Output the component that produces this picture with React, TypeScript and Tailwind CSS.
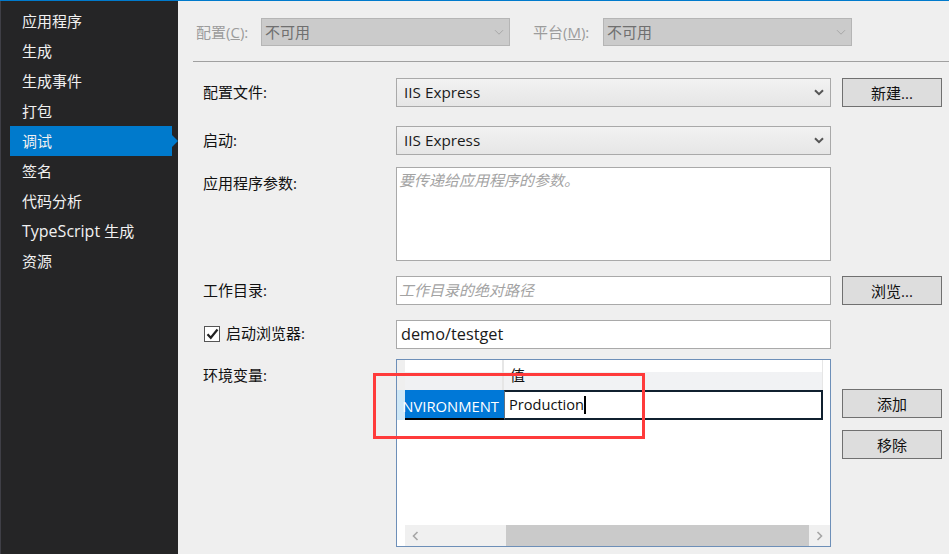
const FONT = "font-['Open_Sans','Noto_Sans_CJK_SC',sans-serif]";

const navItems = ["应用程序", "生成", "生成事件", "打包", "调试", "签名", "代码分析", "TypeScript 生成", "资源"];

function Chevron({ color, width = 1.6 }: { color: string; width?: number }) {
  return (
    <svg width="10" height="7" viewBox="0 0 10 7" fill="none">
      <path d="M1 1.2 5 5.2 9 1.2" stroke={color} strokeWidth={width} />
    </svg>
  );
}

function Select({ value }: { value: string }) {
  return (
    <div className="flex h-[29px] w-[435px] items-center justify-between border border-[#a9a9a9] bg-gradient-to-b from-[#f2f2f2] to-[#e6e6e6] pl-[7px] pr-[6px] text-[15.3px] text-[#1a1a1a]">
      <span>{value}</span>
      <Chevron color="#555555" width={2} />
    </div>
  );
}

function DisabledSelect() {
  return (
    <div className="flex h-[28px] w-[249px] items-center justify-between border border-[#b5b5b5] bg-[#cbcbcb] pl-[3px] pr-[5px] text-[15px] text-[#6f6f6f]">
      <span>不可用</span>
      <Chevron color="#a8a8a8" width={1} />
    </div>
  );
}

function Button({ label }: { label: string }) {
  return (
    <div className="flex h-[29px] w-[100px] items-center justify-center border border-[#707070] bg-[#dddddd] pt-[2px] text-[15px] text-[#111111]">
      {label}
    </div>
  );
}

function Label({ children }: { children: string }) {
  return <div className="w-[203px] pb-[2px] pl-[10px] text-[15px] leading-[20px] text-[#111111]">{children}</div>;
}

export default function App() {
  return (
    <div className={`${FONT} flex h-[554px] w-[949px] flex-col overflow-hidden bg-[#efefef]`}>
      <div className="h-px shrink-0 bg-[#007acc]" />
      <div className="flex min-h-0 flex-1">
        <aside className="w-[178px] shrink-0 border-l border-[#3f3f46] bg-[#252526] pt-[5px]">
          {navItems.map((item) => {
            const active = item === "调试";
            const latin = item.startsWith("TypeScript");
            return (
              <div key={item} className="relative ml-[9px] flex h-[30px] w-[162px] items-center pl-[12px] text-[15px] text-[#f1f1f1]">
                {active && <div className="absolute inset-0 bg-[#007acc]" />}
                {active && (
                  <div className="absolute left-[162px] top-[9px] h-0 w-0 border-y-[6px] border-l-[6px] border-y-transparent border-l-[#007acc]" />
                )}
                {latin ? (
                  <span className="relative">
                    <span className="text-[16px]">TypeScript </span>生成
                  </span>
                ) : (
                  <span className="relative">{item}</span>
                )}
              </div>
            );
          })}
        </aside>

        <main className="relative min-w-0 flex-1">
          <div className="flex pl-[18px] pt-[17px] text-[15px] text-[#9c9c9c]">
            <div className="flex items-center">
              <span className="w-[65px]">配置(<span className="underline">C</span>):</span>
              <DisabledSelect />
            </div>
            <div className="ml-[23px] flex items-center">
              <span className="w-[70px]">平台(<span className="underline">M</span>):</span>
              <DisabledSelect />
            </div>
          </div>

          <div className="ml-[15px] mt-[15px] h-px bg-[#a0a0a0]" />

          <div className="ml-[15px] mt-[16px] flex flex-col">
            <div className="flex items-center">
              <Label>配置文件:</Label>
              <Select value="IIS Express" />
              <div className="ml-[11px]"><Button label="新建..." /></div>
            </div>

            <div className="mt-[19px] flex items-center">
              <Label>启动:</Label>
              <Select value="IIS Express" />
            </div>

            <div className="mt-[12px] flex items-start">
              <div className="pt-[6px]"><Label>应用程序参数:</Label></div>
              <div className="h-[94px] w-[435px] border border-[#a9a9a9] bg-white px-[2px] py-[1px] text-[15px] italic text-[#a3a3a3]">
                要传递给应用程序的参数。
              </div>
            </div>

            <div className="mt-[15px] flex items-center">
              <Label>工作目录:</Label>
              <div className="flex h-[29px] w-[435px] items-center border border-[#a9a9a9] bg-white px-[2px] text-[15px] italic text-[#a3a3a3]">
                工作目录的绝对路径
              </div>
              <div className="ml-[11px]"><Button label="浏览..." /></div>
            </div>

            <div className="mt-[15px] flex items-center">
              <div className="flex w-[203px] items-center pb-[2px] pl-[11px] text-[15px] text-[#111111]">
                <div className="flex h-[16px] w-[16px] items-center justify-center border border-[#555555] bg-white">
                  <svg width="13" height="12" viewBox="0 0 13 12" fill="none">
                    <path d="M1.5 6.2 4.8 9.8 11.5 1.5" stroke="#222222" strokeWidth="2.2" />
                  </svg>
                </div>
                <span className="ml-[6px] pb-[1px]">启动浏览器:</span>
              </div>
              <div className="flex h-[29px] w-[435px] items-center border border-[#a9a9a9] bg-white px-[4px] text-[16.3px] text-[#1a1a1a]">
                demo/testget
              </div>
            </div>

            <div className="mt-[10px] flex items-start">
              <div className="pt-[6px]"><Label>环境变量:</Label></div>
              <div className="flex h-[188px] w-[435px] flex-col border border-[#6d8fb8] bg-white">
                <div className="flex h-[30px] shrink-0 pr-[7px]">
                  <div className="w-[8px] bg-[#efefef]" />
                  <div className="flex flex-1 border-r border-[#e6e6e6]">
                    <div className="w-[99px] border-r-2 border-[#e6e6e6] bg-gradient-to-b from-white from-40% to-[#f0f1f3] to-40%" />
                    <div className="flex-1 bg-gradient-to-b from-white from-40% to-[#f1f2f4] to-40% pl-[6px] text-[15px] leading-[30px] text-[#111111]">
                      值
                    </div>
                  </div>
                </div>
                <div className="flex h-[30px] shrink-0 pr-[7px]">
                  <div className="w-[8px] bg-[#cfe8f7]" />
                  <div className="flex w-[99px] items-center justify-end whitespace-nowrap border-b-2 border-black bg-[#0078d7] pr-[5px] pt-[5px] text-[14.8px] text-white">
                    NVIRONMENT
                  </div>
                  <div className="flex flex-1 items-center border-2 border-l border-[#10202f] border-l-[#607080] bg-white pb-[1px] pl-[4px] text-[14.6px] text-[#111111]">
                    Production
                    <div className="h-[18px] w-[2px] bg-black" />
                  </div>
                </div>
                <div className="flex-1" />
                <div className="ml-[8px] flex h-[21px] shrink-0 bg-[#f0f0f0]">
                  <div className="flex w-[101px] items-center pl-[7px]">
                    <svg width="7" height="10" viewBox="0 0 7 10" fill="none">
                      <path d="M5.5 1 1.5 5 5.5 9" stroke="#a6a6a6" strokeWidth="1.6" />
                    </svg>
                  </div>
                  <div className="flex-1 bg-[#cacaca]" />
                  <div className="flex w-[21px] items-center justify-center">
                    <svg width="7" height="10" viewBox="0 0 7 10" fill="none">
                      <path d="M1.5 1 5.5 5 1.5 9" stroke="#a6a6a6" strokeWidth="1.6" />
                    </svg>
                  </div>
                </div>
              </div>
              <div className="ml-[11px] mt-[30px] flex flex-col gap-[12px]">
                <Button label="添加" />
                <Button label="移除" />
              </div>
            </div>
          </div>

          <div className="absolute left-[195px] top-[372px] h-[66px] w-[272px] border-[3px] border-[#ff3b3b]" />
        </main>
      </div>
    </div>
  );
}
